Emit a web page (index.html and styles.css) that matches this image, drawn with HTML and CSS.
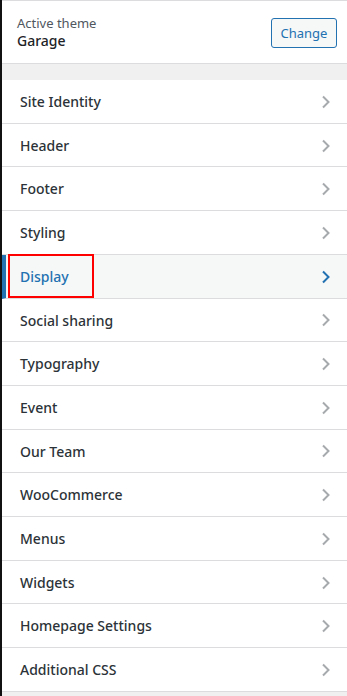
FILE: index.html
```html
<!DOCTYPE html>
<html lang="en">
<head>
<meta charset="utf-8">
<title>Customizer</title>
<link rel="stylesheet" href="styles.css">
</head>
<body>
<div class="panel">
  <div class="theme">
    <div class="theme-info">
      <span class="theme-label">Active theme</span>
      <span class="theme-name">Garage</span>
    </div>
    <button class="change-btn" type="button">Change</button>
  </div>
  <div class="spacer"></div>
  <ul class="sections">
    <li class="section"><span>Site Identity</span><svg class="chev" viewBox="0 0 10 14"><polyline points="2,1.5 7.5,7 2,12.5"/></svg></li>
    <li class="section"><span>Header</span><svg class="chev" viewBox="0 0 10 14"><polyline points="2,1.5 7.5,7 2,12.5"/></svg></li>
    <li class="section"><span>Footer</span><svg class="chev" viewBox="0 0 10 14"><polyline points="2,1.5 7.5,7 2,12.5"/></svg></li>
    <li class="section"><span>Styling</span><svg class="chev" viewBox="0 0 10 14"><polyline points="2,1.5 7.5,7 2,12.5"/></svg></li>
    <li class="section active"><span>Display</span><svg class="chev" viewBox="0 0 10 14"><polyline points="2,1.5 7.5,7 2,12.5"/></svg><span class="highlight"></span></li>
    <li class="section"><span>Social sharing</span><svg class="chev" viewBox="0 0 10 14"><polyline points="2,1.5 7.5,7 2,12.5"/></svg></li>
    <li class="section"><span>Typography</span><svg class="chev" viewBox="0 0 10 14"><polyline points="2,1.5 7.5,7 2,12.5"/></svg></li>
    <li class="section"><span>Event</span><svg class="chev" viewBox="0 0 10 14"><polyline points="2,1.5 7.5,7 2,12.5"/></svg></li>
    <li class="section"><span>Our Team</span><svg class="chev" viewBox="0 0 10 14"><polyline points="2,1.5 7.5,7 2,12.5"/></svg></li>
    <li class="section"><span>WooCommerce</span><svg class="chev" viewBox="0 0 10 14"><polyline points="2,1.5 7.5,7 2,12.5"/></svg></li>
    <li class="section"><span>Menus</span><svg class="chev" viewBox="0 0 10 14"><polyline points="2,1.5 7.5,7 2,12.5"/></svg></li>
    <li class="section"><span>Widgets</span><svg class="chev" viewBox="0 0 10 14"><polyline points="2,1.5 7.5,7 2,12.5"/></svg></li>
    <li class="section"><span>Homepage Settings</span><svg class="chev" viewBox="0 0 10 14"><polyline points="2,1.5 7.5,7 2,12.5"/></svg></li>
    <li class="section"><span>Additional CSS</span><svg class="chev" viewBox="0 0 10 14"><polyline points="2,1.5 7.5,7 2,12.5"/></svg></li>
  </ul>
</div>
</body>
</html>
```
FILE: styles.css
```css
html, body {
  margin: 0;
  padding: 0;
}
body {
  background: #f0f0f1;
  border-left: 2px solid #111;
  min-height: 696px;
  box-sizing: border-box;
  font-family: "Noto Sans", "Open Sans", sans-serif;
  color: #1d2327;
}
.theme {
  background: #fff;
  border-top: 1px solid #dcdcde;
  border-bottom: 1px solid #dcdcde;
  box-sizing: border-box;
  height: 64px;
  display: flex;
  align-items: center;
  justify-content: space-between;
  padding: 0 10px 0 15px;
}
.theme-info {
  display: flex;
  flex-direction: column;
  margin-top: -1px;
}
.theme-label {
  font-size: 13px;
  line-height: 18px;
  color: #50575e;
}
.theme-name {
  font-size: 14px;
  line-height: 18px;
  font-weight: 500;
  color: #1d2327;
}
.change-btn {
  font-family: inherit;
  font-size: 13px;
  color: #2271b1;
  background: #f6f7f7;
  border: 1px solid #2271b1;
  border-radius: 3px;
  height: 30px;
  width: 66px;
  padding: 0;
  margin-top: 2px;
}
.spacer {
  height: 16px;
}
.sections {
  list-style: none;
  margin: 0;
  padding: 0;
}
.section {
  position: relative;
  background: #fff;
  display: flex;
  align-items: center;
  justify-content: space-between;
  padding: 11px 16px 10px 18px;
  line-height: 21.7px;
  font-size: 14px;
  font-weight: 500;
  color: #2c3338;
  border-bottom: 1px solid #dcdcde;
}
.chev {
  width: 10px;
  height: 14px;
  fill: none;
  stroke: #a7aaad;
  stroke-width: 2;
}
.section.active {
  background: #f6f7f7;
  color: #2271b1;
  border-left: 4px solid #2271b1;
  padding-left: 14px;
}
.section.active .chev {
  stroke: #2271b1;
}
.highlight {
  position: absolute;
  left: 2px;
  top: -1px;
  width: 82px;
  height: 40px;
  border: 2px solid #f00;
}
```
